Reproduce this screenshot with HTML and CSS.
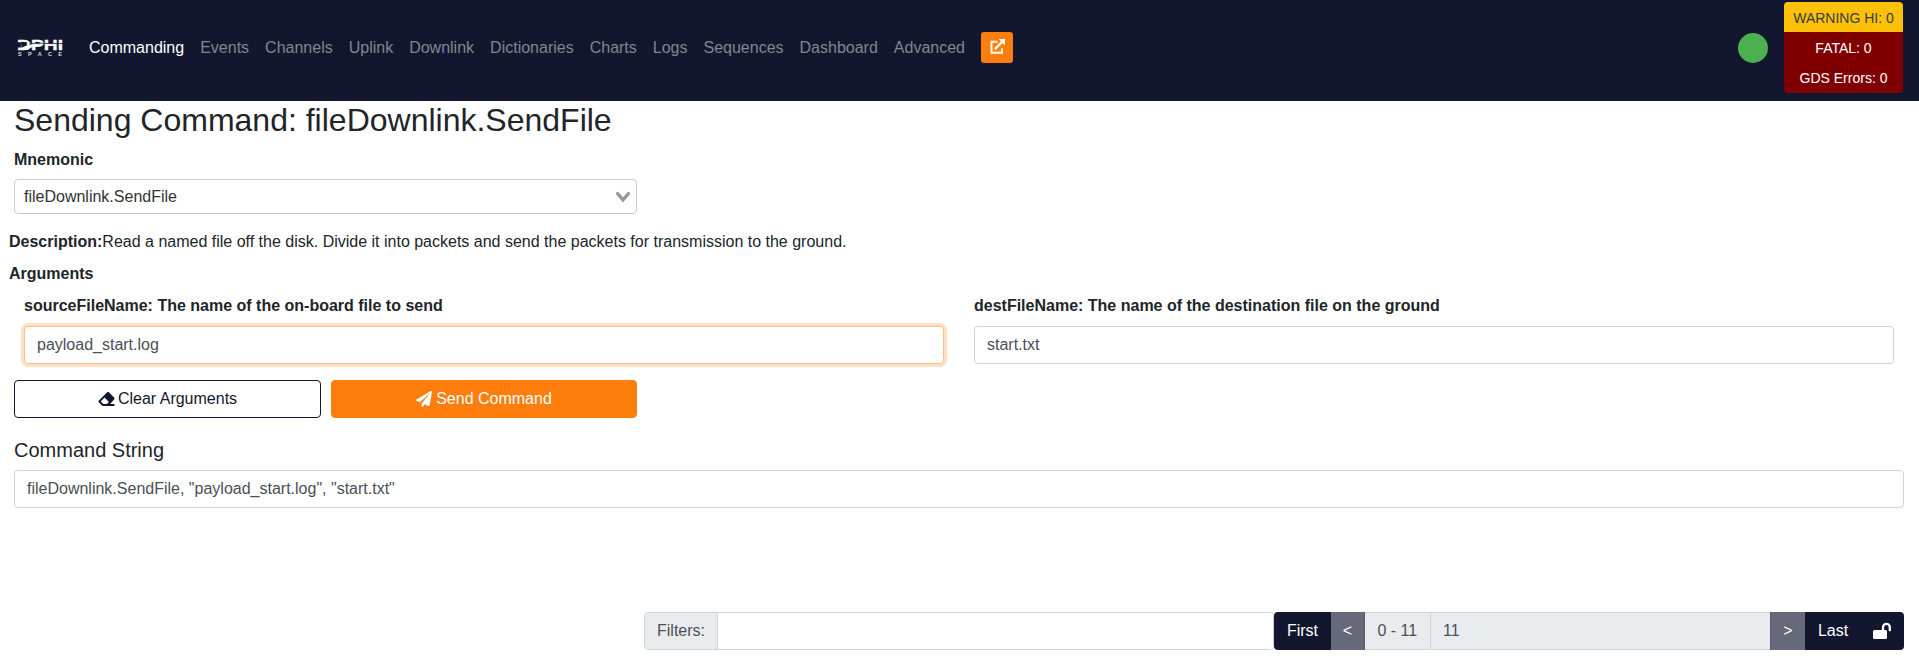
FILE: index.html
```html
<!DOCTYPE html>
<html lang="en">
<head>
<meta charset="utf-8">
<title>Commanding</title>
<link rel="stylesheet" href="styles.css">
</head>
<body>
<nav class="navbar">
  <svg class="logo" viewBox="0 0 44 18" role="img" aria-label="DPHI Space">
    <text class="logo-main" x="-1" y="10" textLength="46" lengthAdjust="spacingAndGlyphs">DPHI</text>
    <path class="logo-gap" d="M-1 2.3H9V3.2H-1ZM-1 3.2H4L3 7.6H-1Z"/>
    <path class="logo-swoosh" d="M0 10C6 6 12 3.6 22 3.2L27 3.6C18 4.4 14 7 10 10Z"/>
    <path class="logo-cut" d="M11 4.2C18 2.6 24 3.2 31 3.6H45"/>
    <text class="logo-sub" x="0" y="16" textLength="44">SPACE</text>
  </svg>
  <div class="links">
    <a class="link active">Commanding</a>
    <a class="link">Events</a>
    <a class="link">Channels</a>
    <a class="link">Uplink</a>
    <a class="link">Downlink</a>
    <a class="link">Dictionaries</a>
    <a class="link">Charts</a>
    <a class="link">Logs</a>
    <a class="link">Sequences</a>
    <a class="link">Dashboard</a>
    <a class="link">Advanced</a>
  </div>
  <button class="popout" aria-label="Open in new window">
    <svg viewBox="0 0 14 14"><path d="M7 2.6H1.4V12.8H11.2V8.6" fill="none" stroke="#fff" stroke-width="1.8"/><path d="M4.6 9.4L11.5 2.5" stroke="#fff" stroke-width="2.2"/><path d="M8 0H14V6Z" fill="#fff"/></svg>
  </button>
  <span class="orb"></span>
  <div class="badges">
    <div class="badge warning">WARNING HI: 0</div>
    <div class="badge">FATAL: 0</div>
    <div class="badge">GDS Errors: 0</div>
  </div>
</nav>
<main class="page">
  <h2 class="title">Sending Command: fileDownlink.SendFile</h2>
  <div class="label mnemonic">Mnemonic</div>
  <div class="select">
    <span>fileDownlink.SendFile</span>
    <svg class="chevron" viewBox="0 0 14 12"><path d="M1.6 2.6L7 8.8L12.4 2.6" fill="none" stroke="#999" stroke-width="3.4" stroke-linecap="round"/></svg>
  </div>
  <div class="description"><b>Description:</b>Read a named file off the disk. Divide it into packets and send the packets for transmission to the ground.</div>
  <div class="label arguments">Arguments</div>
  <div class="args">
    <label class="arg"><span class="label">sourceFileName: The name of the on-board file to send</span><input class="control focused" value="payload_start.log"></label>
    <label class="arg"><span class="label">destFileName: The name of the destination file on the ground</span><input class="control" value="start.txt"></label>
  </div>
  <div class="actions">
    <button class="btn outline">
      <svg class="icon" viewBox="0 0 512 512"><path fill="currentColor" d="M498 273c19-19 19-49 0-68L339 46c-19-19-49-19-68 0L14 303c-19 19-19 49 0 68l96 96c9 9 21 13 34 13h356c7 0 12-5 12-12v-40c0-7-5-12-12-12H373zM195 211l138 138-67 67H152l-80-80z"/></svg>
      Clear Arguments
    </button>
    <button class="btn primary">
      <svg class="icon" viewBox="0 0 512 512"><path fill="currentColor" d="M476 3L13 270c-18 11-16 36 1 43l106 45L407 105c5-5 13 2 8 8L175 405v80c0 24 28 33 42 16l63-77 125 52c14 6 30-3 33-18L510 26c4-17-15-33-34-23z"/></svg>
      Send Command
    </button>
  </div>
  <h5 class="subtitle">Command String</h5>
  <input class="control" value='fileDownlink.SendFile, "payload_start.log", "start.txt"' readonly>
  <div class="history">
    <div class="filters"><span class="addon">Filters:</span><input class="filter-input" aria-label="Filters"></div>
    <div class="pager">
      <button class="page-btn first">First</button>
      <button class="page-btn muted prev">&lt;</button>
      <span class="range">0 - 11</span>
      <span class="count">11</span>
      <button class="page-btn muted next">&gt;</button>
      <button class="page-btn last">Last</button>
      <button class="page-btn lock" aria-label="Unlock">
        <svg viewBox="0 0 18 16"><rect y="7" width="14" height="9" rx="1.5" fill="#fff"/><path d="M10 7.5V4.2a3.4 3.4 0 0 1 6.8 0V7.3" fill="none" stroke="#fff" stroke-width="2.3" stroke-linecap="round"/></svg>
      </button>
    </div>
  </div>
</main>
</body>
</html>
```
FILE: styles.css
```css
* { box-sizing: border-box; }
body {
  margin: 0;
  background: #fff;
  color: #212529;
  font: 16px/24px "Liberation Sans", Arial, sans-serif;
}
button, input { font: inherit; margin: 0; }
.navbar {
  display: flex;
  align-items: flex-start;
  height: 101px;
  padding: 2px 16px 0 18px;
  background: #12172f;
}
.logo { width: 44px; height: 18px; margin-top: 38px; overflow: visible; }
.logo-main { font: bold 14px "Liberation Sans", Arial, sans-serif; fill: #fff; stroke: #fff; stroke-width: .3; }
.logo-sub { font: bold 5.5px "Liberation Sans", Arial, sans-serif; fill: #ddd; }
.logo-gap { fill: #12172f; }
.logo-swoosh { fill: #fff; }
.logo-cut { fill: none; stroke: #12172f; stroke-width: .8; }
.links { display: flex; margin: 34px 0 0 19px; }
.link { padding: 0 8px; color: #83858f; }
.link.active { color: #fff; }
.popout {
  display: flex;
  align-items: center;
  justify-content: center;
  width: 32px;
  height: 31px;
  margin: 30px 0 0 8px;
  padding: 0 0 2px;
  border: 0;
  border-radius: 3px;
  background: #fd7e0d;
}
.popout svg { width: 15px; height: 15px; }
.orb { width: 30px; height: 30px; margin: 31px 16px 0 auto; border-radius: 50%; background: #4caf50; }
.badges { width: 119px; border-radius: 4px; overflow: hidden; font-size: 14px; line-height: 32px; text-align: center; }
.badge { height: 30px; background: #800000; color: #fff; }
.badge:last-child { height: 31px; }
.badge.warning { background: #ffc107; color: #343a40; }
.page { padding: 0 15px 0 14px; }
.title { margin: 0; font-size: 32px; font-weight: 400; line-height: 38px; }
.label { display: block; font-weight: 700; }
.mnemonic { margin: 9px 0 7px; }
.select {
  display: flex;
  align-items: center;
  justify-content: space-between;
  width: 623px;
  height: 35px;
  padding: 0 6px 0 9px;
  border: 1px solid #ccc;
  border-radius: 4px;
  color: #333;
}
.chevron { width: 14px; height: 12px; overflow: visible; }
.description { margin: 16px 0 8px -5px; }
.arguments { margin: 0 0 8px -5px; }
.args { display: grid; grid-template-columns: 1fr 1fr; gap: 30px; padding: 0 10px; }
.arg .label { margin-bottom: 8px; }
.control {
  display: block;
  width: 100%;
  height: 38px;
  padding: 6px 12px;
  border: 1px solid #ced4da;
  border-radius: 4px;
  background: #fff;
  color: #495057;
}
.control.focused { border-color: #fdbf86; box-shadow: 0 0 0 3px #ffdfc2; }
.actions { display: grid; grid-template-columns: 307px 306px; gap: 10px; margin-top: 16px; }
.btn { display: flex; align-items: center; justify-content: center; gap: 4px; height: 38px; border: 1px solid #12172f; border-radius: 4px; padding: 0; }
.outline { background: #fff; color: #12172f; }
.primary { border-color: #fd7e0d; background: #fd7e0d; color: #fff; }
.icon { width: 16px; height: 16px; }
.outline .icon { width: 17px; margin-right: -1px; }
.subtitle { margin: 20px 0 8px; font-size: 20px; font-weight: 400; line-height: 24px; }
.history { display: flex; margin: 104px 0 0 630px; height: 38px; }
.filters { display: flex; width: 630px; border: 1px solid #ced4da; border-radius: 4px; overflow: hidden; }
.addon { padding: 6px 12px; border-right: 1px solid #ced4da; background: #e9ecef; color: #495057; }
.filter-input { flex: 1; min-width: 0; border: 0; padding: 0 12px; }
.pager { display: flex; flex: 1; border-radius: 4px; overflow: hidden; color: #495057; }
.page-btn { display: flex; align-items: center; justify-content: center; padding: 0; border: 0; background: #12172f; color: #fff; }
.muted { background: #666979; }
.first { width: 57px; }
.prev { width: 34px; border-right: 1px solid #595c6e; }
.range, .count { padding: 6px 12px; background: #e9ecef; border: 1px solid #ced4da; border-width: 1px 0; line-height: 24px; }
.range { width: 65px; padding-left: 12.5px; white-space: nowrap; }
.count { flex: 1; border-left-width: 1px; }
.next { width: 35px; border-left: 1px solid #595c6e; }
.last { width: 56px; }
.lock { width: 43px; }
.lock svg { width: 18px; height: 16px; margin-right: 2px; overflow: visible; }
```
